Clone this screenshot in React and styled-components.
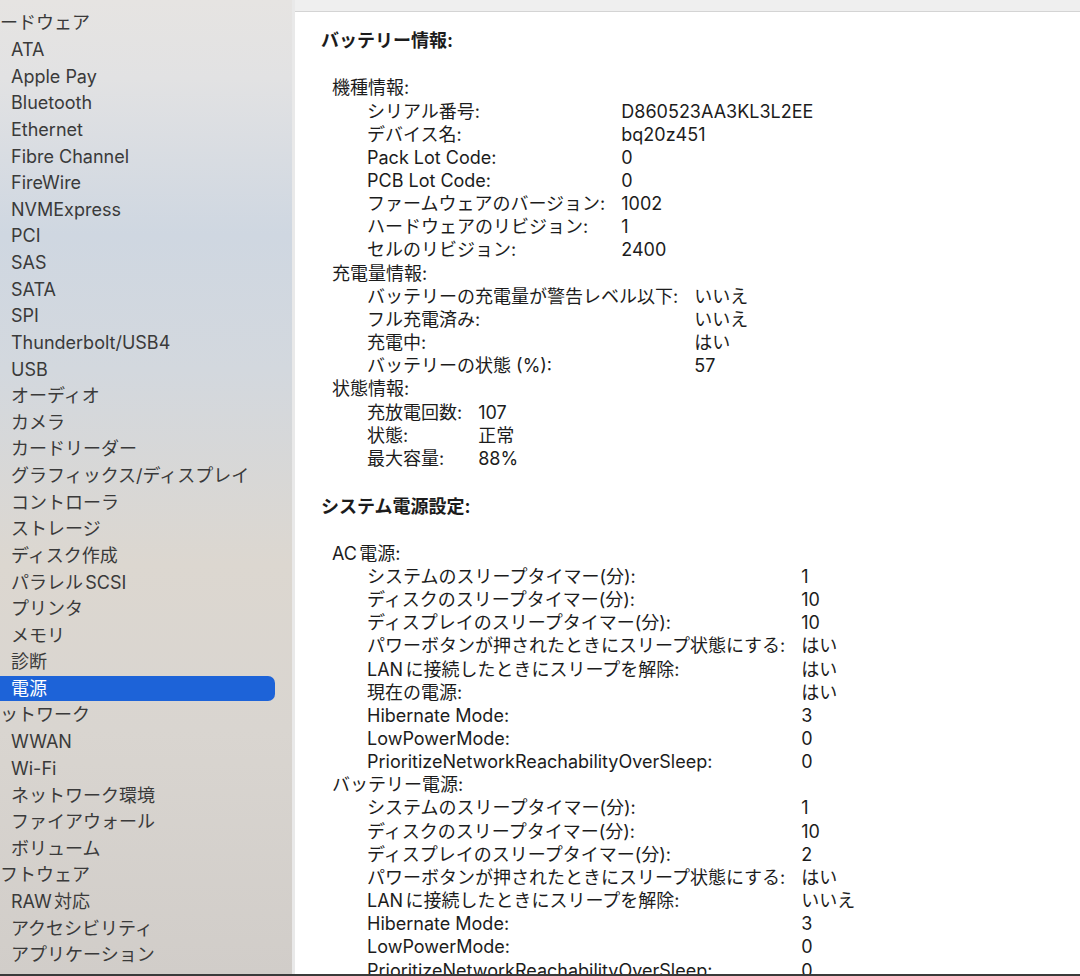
import React from 'react'
import styled, { createGlobalStyle } from 'styled-components'

const sidebar = [
    { label: 'ハードウェア', heading: true },
    { label: 'ATA' },
    { label: 'Apple Pay' },
    { label: 'Bluetooth' },
    { label: 'Ethernet' },
    { label: 'Fibre Channel' },
    { label: 'FireWire' },
    { label: 'NVMExpress' },
    { label: 'PCI' },
    { label: 'SAS' },
    { label: 'SATA' },
    { label: 'SPI' },
    { label: 'Thunderbolt/USB4' },
    { label: 'USB' },
    { label: 'オーディオ' },
    { label: 'カメラ' },
    { label: 'カードリーダー' },
    { label: 'グラフィックス/ディスプレイ' },
    { label: 'コントローラ' },
    { label: 'ストレージ' },
    { label: 'ディスク作成' },
    { label: 'パラレルSCSI' },
    { label: 'プリンタ' },
    { label: 'メモリ' },
    { label: '診断' },
    { label: '電源', selected: true },
    { label: 'ネットワーク', heading: true },
    { label: 'WWAN' },
    { label: 'Wi-Fi' },
    { label: 'ネットワーク環境' },
    { label: 'ファイアウォール' },
    { label: 'ボリューム' },
    { label: 'ソフトウェア', heading: true },
    { label: 'RAW対応' },
    { label: 'アクセシビリティ' },
    { label: 'アプリケーション' },
    { label: 'インストール' },
]

const acRows = [
    ['システムのスリープタイマー(分):', '1'],
    ['ディスクのスリープタイマー(分):', '10'],
    ['ディスプレイのスリープタイマー(分):', '10'],
    ['パワーボタンが押されたときにスリープ状態にする:', 'はい'],
    ['LANに接続したときにスリープを解除:', 'はい'],
    ['現在の電源:', 'はい'],
    ['Hibernate Mode:', '3'],
    ['LowPowerMode:', '0'],
    ['PrioritizeNetworkReachabilityOverSleep:', '0'],
]

const batteryRows = [
    ['システムのスリープタイマー(分):', '1'],
    ['ディスクのスリープタイマー(分):', '10'],
    ['ディスプレイのスリープタイマー(分):', '2'],
    ['パワーボタンが押されたときにスリープ状態にする:', 'はい'],
    ['LANに接続したときにスリープを解除:', 'いいえ'],
    ['Hibernate Mode:', '3'],
    ['LowPowerMode:', '0'],
    ['PrioritizeNetworkReachabilityOverSleep:', '0'],
    ['Standby Delay:', '10800'],
]

const sections = [
    {
        title: 'バッテリー情報:',
        groups: [
            {
                name: '機種情報:',
                rows: [
                    ['シリアル番号:', 'D860523AA3KL3L2EE'],
                    ['デバイス名:', 'bq20z451'],
                    ['Pack Lot Code:', '0'],
                    ['PCB Lot Code:', '0'],
                    ['ファームウェアのバージョン:', '1002'],
                    ['ハードウェアのリビジョン:', '1'],
                    ['セルのリビジョン:', '2400'],
                ],
            },
            {
                name: '充電量情報:',
                rows: [
                    ['バッテリーの充電量が警告レベル以下:', 'いいえ'],
                    ['フル充電済み:', 'いいえ'],
                    ['充電中:', 'はい'],
                    ['バッテリーの状態 (%):', '57'],
                ],
            },
            {
                name: '状態情報:',
                rows: [
                    ['充放電回数:', '107'],
                    ['状態:', '正常'],
                    ['最大容量:', '88%'],
                ],
            },
        ],
    },
    {
        title: 'システム電源設定:',
        groups: [
            { name: 'AC電源:', rows: acRows },
            { name: 'バッテリー電源:', rows: batteryRows },
        ],
    },
]

const App = () => {
    return (
        <React.Fragment>
            <GlobalStyle />
            <Window>
                <Sidebar>
                    {sidebar.map((entry, idx) =>
                        entry.heading ? (
                            <Heading key={idx}>{entry.label}</Heading>
                        ) : (
                            <Item key={idx} $selected={entry.selected}>
                                {entry.label}
                            </Item>
                        )
                    )}
                </Sidebar>
                <Main>
                    <TopBar />
                    <Content>
                        {sections.map((section, sIdx) => (
                            <Section key={sIdx}>
                                <SectionTitle>{section.title}</SectionTitle>
                                {section.groups.map((group, gIdx) => (
                                    <div key={gIdx}>
                                        <GroupName>{group.name}</GroupName>
                                        <Table>
                                            {group.rows.map(([label, value], rIdx) => (
                                                <React.Fragment key={rIdx}>
                                                    <Cell>{label}</Cell>
                                                    <Cell>{value}</Cell>
                                                </React.Fragment>
                                            ))}
                                        </Table>
                                    </div>
                                ))}
                            </Section>
                        ))}
                    </Content>
                </Main>
            </Window>
        </React.Fragment>
    )
}

const GlobalStyle = createGlobalStyle`
    html, body {
        margin: 0;
        padding: 0;
        background: #fff;
    }
    body {
        font-family: Inter, "Noto Sans CJK JP", sans-serif;
        text-autospace: normal;
    }
`

const Window = styled.div`
    width: 1080px;
    height: 976px;
    box-sizing: border-box;
    display: flex;
    overflow: hidden;
    border-bottom: 2px solid #3a3a3a;
`

const Sidebar = styled.div`
    width: 295px;
    flex-shrink: 0;
    display: flex;
    flex-direction: column;
    padding: 9.6px 17px 0 0;
    box-sizing: border-box;
    overflow: hidden;
    border-right: 3px solid #e9e9e9;
    background: linear-gradient(
        to bottom,
        #e6e4e2 0%,
        #e2e2e3 8%,
        #cfd7e1 24%,
        #d3d8de 38%,
        #dcd7d0 58%,
        #d9d5d0 75%,
        #d1cdc9 100%
    );
    color: #3a3a3a;
    font-size: 18px;
`

const Heading = styled.div`
    flex-shrink: 0;
    height: 26.65px;
    line-height: 26.65px;
    margin-left: -18px;
    white-space: nowrap;
`

const Item = styled.div`
    flex-shrink: 0;
    height: 25px;
    line-height: 25px;
    margin: 0.825px 0;
    padding-left: 11px;
    white-space: nowrap;
    border-radius: 0 7px 7px 0;
    background: ${(p) => (p.$selected ? '#1d63d8' : 'transparent')};
    color: ${(p) => (p.$selected ? '#fff' : 'inherit')};
`

const Main = styled.div`
    flex: 1;
    display: flex;
    flex-direction: column;
    background: #fff;
    min-width: 0;
`

const TopBar = styled.div`
    height: 11px;
    flex-shrink: 0;
    background: #efefef;
    border-bottom: 1px solid #d4d4d4;
`

const Content = styled.div`
    padding: 17.4px 0 0 26px;
    color: #1c1c1c;
    font-size: 18px;
    line-height: 23.15px;
`

const Section = styled.div`
    margin-bottom: 24.8px;
`

const SectionTitle = styled.div`
    font-weight: 700;
    margin-bottom: 23.8px;
`

const GroupName = styled.div`
    padding-left: 11px;
`

const Table = styled.div`
    display: grid;
    grid-template-columns: max-content max-content;
    column-gap: 16px;
    padding-left: 46px;
`

const Cell = styled.div`
    white-space: nowrap;
`

export default App
